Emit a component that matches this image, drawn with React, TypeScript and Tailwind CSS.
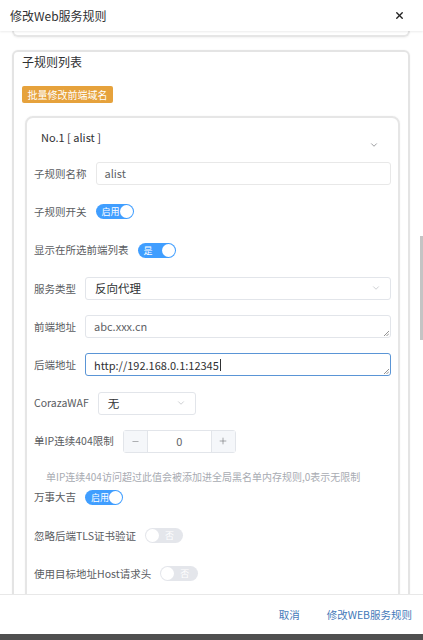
import { ChevronDown, X, Minus, Plus } from 'lucide-react';

const font = { fontFamily: '"Noto Sans CJK SC", "Noto Sans", sans-serif' };

function Toggle({ on, text }: { on: boolean; text: string }) {
  return (
    <div
      className={`relative flex h-[15px] w-[38px] items-center rounded-full ${
        on ? 'bg-[#409eff]' : 'bg-[#e4e6eb]'
      }`}
    >
      {on ? (
        <>
          <span className="pl-[6px] text-[9px] leading-none text-white">{text}</span>
          <span className="absolute right-[1px] top-[1px] h-[13px] w-[13px] rounded-full bg-white" />
        </>
      ) : (
        <>
          <span className="absolute left-[1px] top-[1px] h-[13px] w-[13px] rounded-full bg-white" />
          <span className="ml-auto pr-[9px] text-[9px] leading-none text-white">{text}</span>
        </>
      )}
    </div>
  );
}

function Row({ label, children }: { label: string; children: React.ReactNode }) {
  return (
    <div className="mb-[15.3px] flex h-[23px] items-center gap-[9px]">
      <span className="shrink-0 text-[10.5px] text-[#5a5c61]">{label}</span>
      {children}
    </div>
  );
}

function Resize() {
  return (
    <svg className="absolute bottom-[1px] right-[1px]" width="6" height="6" viewBox="0 0 6 6">
      <path d="M1 6 L6 1 M3.5 6 L6 3.5" stroke="#777" strokeWidth="0.8" />
    </svg>
  );
}

export default function App() {
  return (
    <div className="flex h-[640px] w-[423px] flex-col overflow-hidden bg-[#4f4f4f]" style={font}>
      <div className="flex h-[634px] flex-col bg-white">
        {/* header */}
        <div className="z-10 flex h-[31px] shrink-0 items-center justify-between pl-[10px] pr-[18px] shadow-[0_1px_2px_rgba(0,0,0,0.08)]">
          <span className="text-[12px] text-[#303133]">修改Web服务规则</span>
          <X size={11} strokeWidth={3} className="text-[#222]" />
        </div>

        {/* body */}
        <div className="relative flex-1 overflow-hidden">
          <div className="pl-[12px] pr-[13px]">
            <div className="h-[6px] rounded-b-[6px] border-x-2 border-b-2 border-[#e6e6e6] shadow-[0_1px_2px_rgba(0,0,0,0.05)]" />

            <div className="mt-[13px] rounded-[6px] border-2 border-[#e4e4e4] px-[8px] pb-[20px] shadow-[0_0_2px_rgba(0,0,0,0.06)]">
              <div className="flex h-[20px] items-center text-[12px] text-[#303133]">子规则列表</div>
              <div className="mt-[14px] flex h-[17px] w-[91px] items-center justify-center rounded-[2px] bg-[#e6a23c] text-[10px] text-white">
                批量修改前端域名
              </div>

              <div className="mt-[13px] ml-[3px] rounded-[8px] border-2 border-[#e6e6e6] px-[7px] pb-[30px] shadow-[0_0_2px_rgba(0,0,0,0.05)]">
                <div className="flex h-[44px] items-start justify-between">
                  <span className="mt-[11px] pl-[7px] text-[11px] text-[#303133]">No.1 [ alist ]</span>
                  <ChevronDown size={10} strokeWidth={1.5} className="mr-[12px] mt-[22px] text-[#606266]" />
                </div>

                <Row label="子规则名称">
                  <div className="flex h-[23px] flex-1 items-center rounded-[3px] border border-[#e8e8e8] pl-[8px] text-[11px] text-[#606266]">
                    alist
                  </div>
                </Row>

                <Row label="子规则开关">
                  <Toggle on text="启用" />
                </Row>

                <Row label="显示在所选前端列表">
                  <Toggle on text="是" />
                </Row>

                <Row label="服务类型">
                  <div className="flex h-[23px] flex-1 items-center justify-between rounded-[3px] border border-[#e2e5ea] pl-[9px] pr-[9px] text-[11.5px] text-[#303133]">
                    <span>反向代理</span>
                    <ChevronDown size={10} strokeWidth={1.5} className="text-[#b0b3b8]" />
                  </div>
                </Row>

                <Row label="前端地址">
                  <div className="relative flex h-[23px] flex-1 items-center rounded-[3px] border border-[#e2e5ea] pl-[8px] text-[11px] text-[#606266]">
                    abc.xxx.cn
                    <Resize />
                  </div>
                </Row>

                <Row label="后端地址">
                  <div className="relative flex h-[23px] flex-1 items-center rounded-[3px] border border-[#5a95d6] pl-[8px] text-[11px] text-[#303133]">
                    http://192.168.0.1:12345
                    <span className="ml-[1px] h-[12px] w-px bg-[#303133]" />
                    <Resize />
                  </div>
                </Row>

                <Row label="CorazaWAF">
                  <div className="flex h-[23px] w-[98px] items-center justify-between rounded-[3px] border border-[#e2e5ea] pl-[9px] pr-[9px] text-[11.5px] text-[#303133]">
                    <span>无</span>
                    <ChevronDown size={10} strokeWidth={1.5} className="text-[#b0b3b8]" />
                  </div>
                </Row>

                <div className="-mt-[0.5px] flex h-[23px] items-center gap-[9px]">
                  <span className="shrink-0 text-[10.5px] text-[#5a5c61]">单IP连续404限制</span>
                  <div className="flex h-[23px] w-[113px] rounded-[3px] border border-[#e2e5ea]">
                    <div className="flex w-[24px] items-center justify-center border-r border-[#e2e5ea] bg-[#f5f7fa] text-[#606266]">
                      <Minus size={9} strokeWidth={1.3} />
                    </div>
                    <div className="flex flex-1 items-center justify-center text-[11px] text-[#606266]">0</div>
                    <div className="flex w-[24px] items-center justify-center border-l border-[#e2e5ea] bg-[#f5f7fa] text-[#606266]">
                      <Plus size={10} strokeWidth={1.3} />
                    </div>
                  </div>
                </div>
                <div className="mt-[17px] pl-[12px] text-[10px] leading-[14px] text-[#a8abb2]">
                  单IP连续404访问超过此值会被添加进全局黑名单内存规则,0表示无限制
                </div>

                <div className="mt-[2px]">
                  <Row label="万事大吉">
                    <Toggle on text="启用" />
                  </Row>
                </div>

                <Row label="忽略后端TLS证书验证">
                  <Toggle on={false} text="否" />
                </Row>

                <Row label="使用目标地址Host请求头">
                  <Toggle on={false} text="否" />
                </Row>
              </div>
            </div>
          </div>

          {/* scrollbar */}
          <div className="absolute right-0 top-[205px] h-[104px] w-[3px] bg-[#c4c4c4]" />
        </div>

        {/* footer */}
        <div className="flex h-[40px] shrink-0 items-center justify-end gap-[27px] border-t border-[#e8e8e8] pr-[11px] text-[10.5px] text-[#4479b9]">
          <span>取消</span>
          <span>修改WEB服务规则</span>
        </div>
      </div>
    </div>
  );
}
